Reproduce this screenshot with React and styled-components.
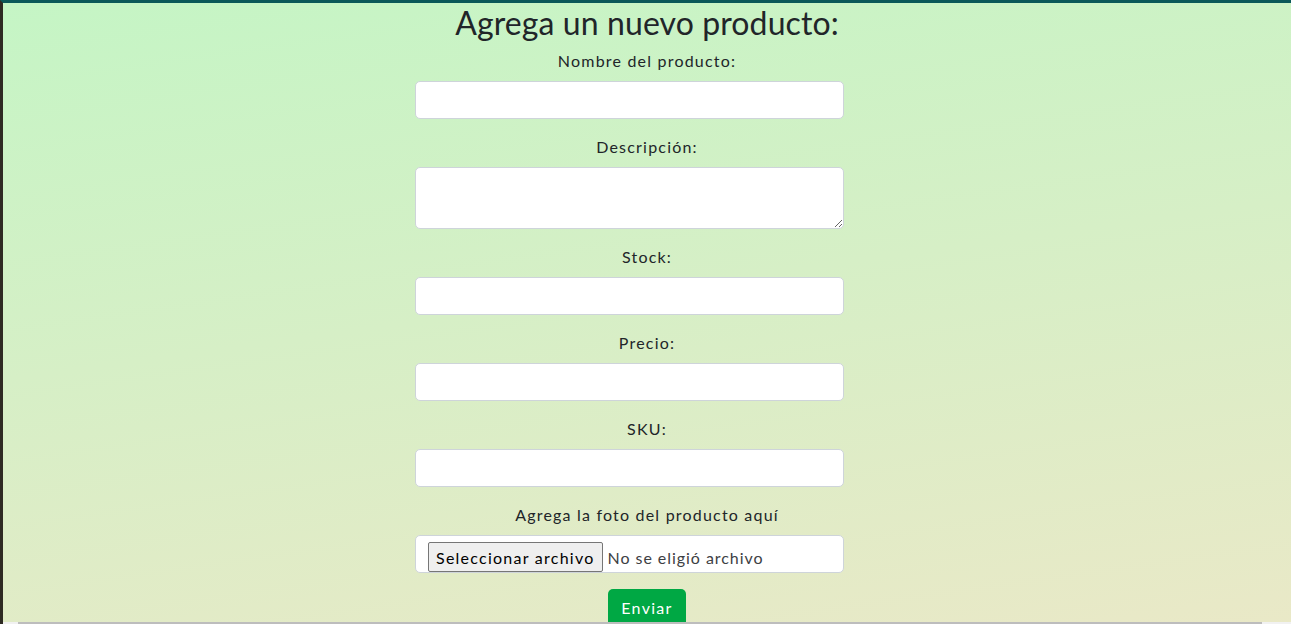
import React from 'react'
import styled, { createGlobalStyle } from 'styled-components'

const GlobalStyle = createGlobalStyle`
  html, body {
    margin: 0;
    padding: 0;
  }
  body {
    font-family: Lato, "Noto Sans", sans-serif;
    color: #212529;
  }
  * {
    box-sizing: border-box;
  }
`

const Page = styled.main`
  min-height: 660px;
  border-top: 3px solid #0b5859;
  border-left: 3px solid #2e2a23;
  background: linear-gradient(172deg, #c5f5c5 0%, #d6efc6 45%, #ebe8c7 100%);
  display: flex;
  flex-direction: column;
  align-items: center;
`

const Title = styled.h2`
  margin: 0 0 8px;
  padding-top: 2px;
  font-size: 32px;
  font-weight: 400;
  line-height: 36px;
  letter-spacing: 0.1px;
  text-align: center;
`

const Form = styled.form`
  width: 464px;
  display: flex;
  flex-direction: column;
  align-items: center;
`

const Field = styled.div`
  width: 100%;
  margin-bottom: 16px;
  display: flex;
  flex-direction: column;
`

const Label = styled.label`
  display: block;
  margin-bottom: 8px;
  font-size: 16px;
  line-height: 24px;
  text-align: center;
  letter-spacing: 1.2px;
`

const controlStyles = `
  display: block;
  width: 429px;
  border: 1px solid #ced4da;
  border-radius: 5px;
  background: #fff;
  font-family: inherit;
  font-size: 16px;
  padding: 6px 12px;
  color: #212529;
  outline: none;
`

const Input = styled.input`
  ${controlStyles}
  height: 38px;
`

const TextArea = styled.textarea`
  ${controlStyles}
  height: 62px;
  resize: vertical;
`

const FileBox = styled.div`
  ${controlStyles}
  height: 38px;
  display: flex;
  align-items: center;
  padding: 0 12px;
  gap: 5px;
`

const FileButton = styled.span`
  display: inline-flex;
  align-items: center;
  height: 30px;
  margin-top: 6px;
  padding: 0 7px;
  background: #efefef;
  border: 1px solid #767676;
  border-radius: 2px;
  font-size: 16px;
  color: #000;
  letter-spacing: 1.25px;
`

const FileText = styled.span`
  margin-top: 6px;
  font-size: 16px;
  color: #3d4043;
  letter-spacing: 0.95px;
`

const HiddenInput = styled.input`
  display: none;
`

const SubmitButton = styled.button`
  height: 38px;
  padding: 6px 13px;
  border: none;
  border-radius: 5px;
  background: #00a844;
  color: #fff;
  font-family: inherit;
  font-size: 16px;
  line-height: 24px;
  letter-spacing: 1.3px;
`

const ScrollTrack = styled.div`
  position: fixed;
  left: 3px;
  right: 0;
  bottom: 0;
  height: 2px;
  background: #f1f1f1;
  display: flex;
  padding-left: 15px;
  padding-right: 29px;
`

const ScrollThumb = styled.div`
  flex: 1;
  background: #bdbdbd;
`

const fields = [
  { id: 'nombre', label: 'Nombre del producto:' },
  { id: 'descripcion', label: 'Descripción:', multiline: true },
  { id: 'stock', label: 'Stock:' },
  { id: 'precio', label: 'Precio:' },
  { id: 'sku', label: 'SKU:' },
]

const App = () => {
  return (
    <>
      <GlobalStyle />
      <Page>
        <Title>Agrega un nuevo producto:</Title>
        <Form onSubmit={(e) => e.preventDefault()}>
          {fields.map((f) => (
            <Field key={f.id}>
              <Label htmlFor={f.id}>{f.label}</Label>
              {f.multiline ? <TextArea id={f.id} /> : <Input id={f.id} type="text" />}
            </Field>
          ))}
          <Field>
            <Label htmlFor="foto">Agrega la foto del producto aquí</Label>
            <FileBox as="label" htmlFor="foto">
              <FileButton>Seleccionar archivo</FileButton>
              <FileText>No se eligió archivo</FileText>
              <HiddenInput id="foto" type="file" />
            </FileBox>
          </Field>
          <SubmitButton type="submit">Enviar</SubmitButton>
        </Form>
      </Page>
      <ScrollTrack>
        <ScrollThumb />
      </ScrollTrack>
    </>
  )
}

export default App
